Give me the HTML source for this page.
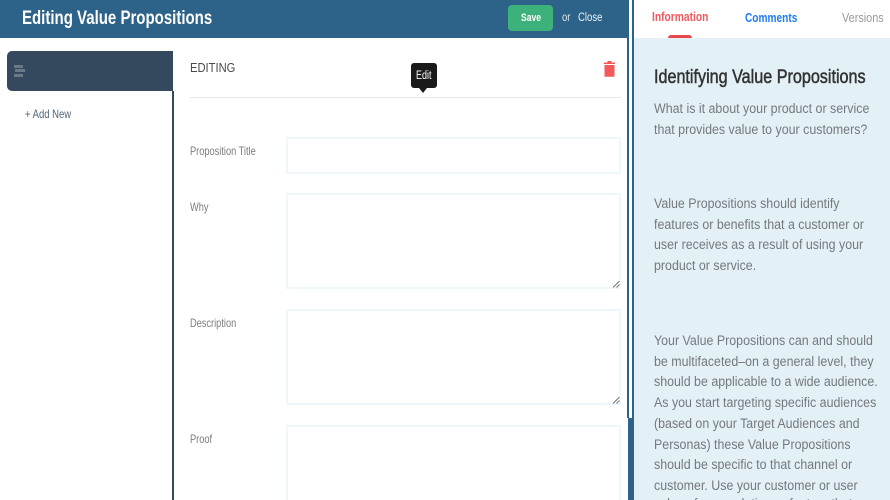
<!DOCTYPE html>
<html><head><meta charset="utf-8">
<style>
html,body{margin:0;padding:0;width:890px;height:500px;overflow:hidden;background:#fff;font-family:"Liberation Sans",sans-serif}
#r{position:absolute;left:0;top:0;width:890px;height:500px;overflow:hidden;background:#fff}
#r div{position:absolute;box-sizing:border-box}
.t{white-space:nowrap;transform-origin:0 0}
.f{border:2px solid #eef7fb;background:#fff}
.l{color:#7c7c7c;font-size:12px;left:190px;transform:scaleX(.77)}
.p{left:654px;color:#74797d;font-size:13.5px;transform:scaleX(.92)}
</style></head><body><div id="r">
<div style="left:0;top:0;width:629px;height:38px;background:#2d6289"></div>
<div class="t" style="left:22px;top:7px;color:#fff;font-size:19.5px;font-weight:bold;line-height:22px;transform:scaleX(.77)">Editing Value Propositions</div>
<div style="left:508px;top:5px;width:45px;height:26px;background:#3cb179;border-radius:4px"></div>
<div class="t" style="left:521px;top:12px;color:#fff;font-size:11px;font-weight:bold;line-height:13px;transform:scaleX(.78)">Save</div>
<div class="t" style="left:562px;top:11px;color:#dfe9f0;font-size:11.5px;line-height:14px;transform:scaleX(.82)">or</div>
<div class="t" style="left:578px;top:11px;color:#eef4f8;font-size:11.5px;line-height:14px;transform:scaleX(.83)">Close</div>

<div style="left:627px;top:38px;width:2px;height:380px;background:#2d6289"></div>
<div style="left:628px;top:418px;width:4px;height:82px;background:#2d6289"></div>
<div style="left:632px;top:0;width:2px;height:500px;background:#2d6289"></div>
<div style="left:634px;top:38px;width:256px;height:462px;background:#e3f0f6"></div>

<div style="left:7px;top:51px;width:166px;height:40px;background:#34495e;border-radius:5px 0 0 5px"></div>
<div style="left:172px;top:91px;width:2px;height:409px;background:#34495e"></div>
<div style="left:14px;top:65px;width:9px;height:3px;background:#6b7885"></div>
<div style="left:15px;top:69px;width:10px;height:3px;background:#6b7885"></div>
<div style="left:14px;top:74px;width:9px;height:3px;background:#6b7885"></div>
<div class="t" style="left:25px;top:107px;color:#4f6478;font-size:12px;line-height:14px;transform:scaleX(.79)">+ Add New</div>

<div class="t" style="left:190px;top:60px;color:#4a4a4a;font-size:13px;line-height:15px;transform:scaleX(.86)">EDITING</div>
<div style="left:190px;top:97px;width:431px;height:1px;background:#e4e7e8"></div>

<div style="left:411px;top:63px;width:26px;height:25px;background:#1a1a1a;border-radius:3px"></div>
<div style="left:419px;top:88px;width:0;height:0;border-left:4.5px solid transparent;border-right:4.5px solid transparent;border-top:5px solid #1a1a1a"></div>
<div class="t" style="left:416px;top:70px;color:#fff;font-size:11.500px;line-height:13px;transform:scaleX(.78)">Edit</div>

<svg style="position:absolute;left:603px;top:60px" width="13" height="17" viewBox="0 0 13 17"><path d="M4.500 1h4v1.500h3.500V4H1V2.500h3.500z" fill="#f55a5a"/><path d="M1.500 5h10v11a.8.8 0 0 1-.8.8H2.300a.8.8 0 0 1-.8-.8z" fill="#f55a5a"/></svg>

<div class="t l" style="top:145px;line-height:13px">Proposition Title</div>
<div class="f" style="left:286px;top:137px;width:335px;height:37px"></div>
<div class="t l" style="top:201px;line-height:13px">Why</div>
<div class="f" style="left:286px;top:193px;width:335px;height:96px"></div>
<div class="t l" style="top:317px;line-height:13px">Description</div>
<div class="f" style="left:286px;top:309px;width:335px;height:96px"></div>
<div class="t l" style="top:433px;line-height:13px">Proof</div>
<div class="f" style="left:286px;top:425px;width:335px;height:96px"></div>
<svg style="position:absolute;left:613px;top:281px" width="7" height="7"><path d="M0 6.500 6.500 0M3.500 6.500 6.500 3.500" stroke="#777" fill="none"/></svg>
<svg style="position:absolute;left:613px;top:397px" width="7" height="7"><path d="M0 6.500 6.500 0M3.500 6.500 6.500 3.500" stroke="#777" fill="none"/></svg>

<div class="t" style="left:652px;top:10px;color:#f0595c;font-size:12.500px;font-weight:bold;line-height:14px;transform:scaleX(.82)">Information</div>
<div style="left:668px;top:35px;width:24px;height:3px;background:#e8474c;border-radius:3px 3px 0 0"></div>
<div class="t" style="left:745px;top:11px;color:#1f7df2;font-size:12.500px;font-weight:bold;line-height:14px;transform:scaleX(.81)">Comments</div>
<div class="t" style="left:842px;top:11px;color:#999;font-size:12.500px;line-height:14px;transform:scaleX(.87)">Versions</div>

<div class="t" style="left:654px;top:67px;color:#333;font-size:19px;line-height:22px;-webkit-text-stroke:.5px #333;transform:scaleX(.85)">Identifying Value Propositions</div>

<div class="t p" style="top:99px;line-height:20.500px">What is it about your product or service<br>that provides value to your customers?</div>
<div class="t p" style="top:194px;line-height:20.700px">Value Propositions should identify<br>features or benefits that a customer or<br>user receives as a result of using your<br>product or service.</div>
<div class="t p" style="top:331px;line-height:20.700px">Your Value Propositions can and should<br>be multifaceted–on a general level, they<br>should be applicable to a wide audience.<br>As you start targeting specific audiences<br>(based on your Target Audiences and<br>Personas) these Value Propositions<br>should be specific to that channel or<br>customer. Use your customer or user</div>
<div class="t p" style="top:494px;line-height:20.700px">value of your solution or feature that</div>
</div></body></html>
